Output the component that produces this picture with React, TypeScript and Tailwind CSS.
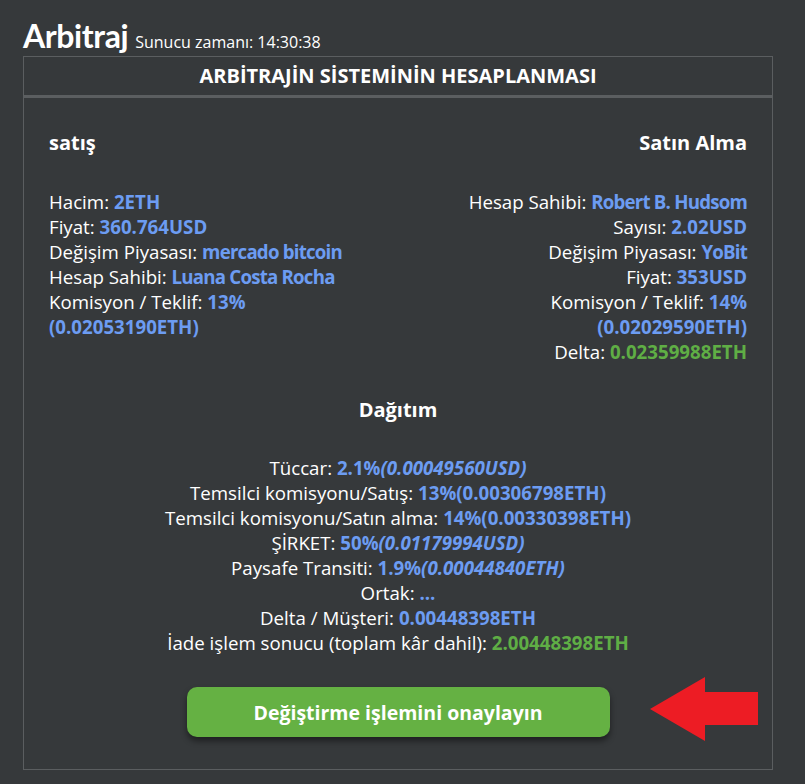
const BLUE = "text-[#6c9cf2] font-bold";
const NAME = "text-[#6c9cf2] font-bold tracking-[-0.8px]";
const GREEN = "text-[#5fae45] font-bold";

type Row = { label: string; value: React.ReactNode; tone?: string };

const sell: Row[] = [
  { label: "Hacim:", value: "2ETH" },
  { label: "Fiyat:", value: "360.764USD" },
  { label: "Değişim Piyasası:", value: "mercado bitcoin", tone: NAME },
  { label: "Hesap Sahibi:", value: "Luana Costa Rocha", tone: NAME },
];

const buy: Row[] = [
  { label: "Hesap Sahibi:", value: "Robert B. Hudsom", tone: NAME },
  { label: "Sayısı:", value: "2.02USD" },
  { label: "Değişim Piyasası:", value: "YoBit", tone: NAME },
  { label: "Fiyat:", value: "353USD" },
];

function Line({ label, value, tone = BLUE }: Row) {
  return (
    <div>
      {label} <span className={tone}>{value}</span>
    </div>
  );
}

export default function App() {
  return (
    <div className="relative min-h-[784px] bg-[#36393b] text-white font-['Open_Sans',sans-serif] px-[23px] pt-[12px]">
      <div className="flex items-baseline gap-[7px] h-[44px]">
        <h1 className="text-[32px] font-bold font-['Lato',sans-serif] tracking-[-0.4px]">Arbitraj</h1>
        <span className="text-[16px]">Sunucu zamanı: 14:30:38</span>
      </div>

      <div className="w-[750px] h-[714px] border border-[#5b5e60] flex flex-col">
        <div className="h-[41px] border-b-[3px] border-[#5b5e60] flex items-center justify-center text-[20px] font-bold">
          ARBİTRAJİN SİSTEMİNİN HESAPLANMASI
        </div>

        <div className="px-[25px] pt-[32px] text-[18.7px] leading-[25px]">
          <div className="flex justify-between">
            <div>
              <div className="text-[20px] font-bold leading-[26px] mb-[33px]">satış</div>
              {sell.map((r) => (
                <Line key={r.label} {...r} />
              ))}
              <div>
                Komisyon / Teklif: <span className={BLUE}>13%</span>
              </div>
              <div className={BLUE}>(0.02053190ETH)</div>
            </div>
            <div className="text-right">
              <div className="text-[20px] font-bold leading-[26px] mb-[33px]">Satın Alma</div>
              {buy.map((r) => (
                <Line key={r.label} {...r} />
              ))}
              <div>
                Komisyon / Teklif: <span className={BLUE}>14%</span>
              </div>
              <div className={BLUE}>(0.02029590ETH)</div>
              <Line label="Delta:" value="0.02359988ETH" tone={GREEN} />
            </div>
          </div>

          <div className="text-center mt-[33px]">
            <div className="text-[20px] font-bold leading-[26px] mb-[32px]">Dağıtım</div>
            <div>
              Tüccar: <span className={BLUE}>2.1%<i>(0.00049560USD)</i></span>
            </div>
            <Line label="Temsilci komisyonu/Satış:" value="13%(0.00306798ETH)" />
            <Line label="Temsilci komisyonu/Satın alma:" value="14%(0.00330398ETH)" />
            <div>
              ŞİRKET: <span className={BLUE}>50%<i>(0.01179994USD)</i></span>
            </div>
            <div>
              Paysafe Transiti: <span className={BLUE}>1.9%<i>(0.00044840ETH)</i></span>
            </div>
            <Line label="Ortak:" value="..." />
            <Line label="Delta / Müşteri:" value="0.00448398ETH" />
            <Line label="İade işlem sonucu (toplam kâr dahil):" value="2.00448398ETH" tone={GREEN} />
          </div>

          <div className="flex justify-center mt-[32px]">
            <button className="w-[423px] h-[50px] rounded-[10px] bg-[#65b143] text-white text-[19.5px] font-bold shadow-[0_4px_6px_rgba(0,0,0,0.45)]">
              Değiştirme işlemini onaylayın
            </button>
          </div>
        </div>
      </div>

      <svg className="absolute left-[650px] top-[677px]" width="108" height="65" viewBox="0 0 108 65">
        <polygon points="0,32 55,0 55,15 108,15 108,48 55,48 55,64" fill="#ed1c24" />
      </svg>
    </div>
  );
}
